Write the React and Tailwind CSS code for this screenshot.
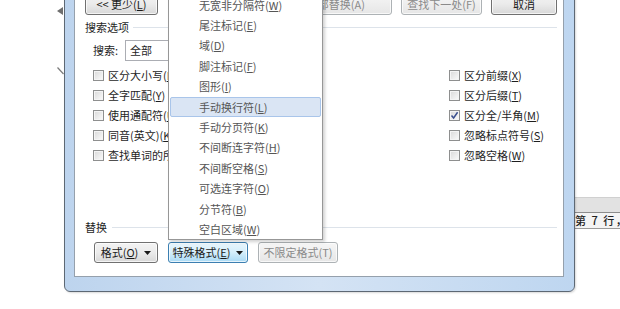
import React from 'react'

const FONT = "font-['Noto_Sans_CJK_SC','Microsoft_YaHei',sans-serif]"

function K({ children }) {
  return <span className="underline underline-offset-[1px]">{children}</span>
}

function Arrow() {
  return (
    <svg width="7" height="4" viewBox="0 0 7 4" className="ml-[6px] shrink-0">
      <path d="M0 0 H7 L3.5 4 Z" fill="#1a1a1a" />
    </svg>
  )
}

function Btn({ children, variant = 'normal', className = '' }) {
  const styles = {
    normal: 'border-[#707070] bg-linear-to-b from-[#f3f3f3] via-[#ebebeb] to-[#d8d8d8] text-[#1a1a1a]',
    hot: 'border-[#3c7fb1] bg-linear-to-b from-[#e8f5fc] via-[#d4eefb] to-[#a9daf5] text-[#1a1a1a]',
    disabled: 'border-[#adb2b5] bg-linear-to-b from-[#f6f6f6] to-[#e6e6e6] text-[#8a8a8a]',
  }
  return (
    <div
      className={`flex items-center whitespace-nowrap rounded-[3px] border shadow-[inset_0_0_0_1px_rgba(255,255,255,0.7)] text-[11px] leading-none ${styles[variant]} ${className}`}
    >
      {children}
    </div>
  )
}

function Check({ checked, children }) {
  return (
    <div className="flex items-center h-[20px]">
      <span className="w-[11px] h-[11px] border border-[#8e8f8f] bg-linear-to-br from-[#d9d9d9] to-[#fbfbfb] shadow-[inset_0_0_0_1px_#f4f4f4] flex items-center justify-center shrink-0">
        {checked && (
          <svg width="9" height="9" viewBox="0 0 9 9">
            <path d="M1.5 4.5 L3.6 7 L7.6 1.2" fill="none" stroke="#3a4f8e" strokeWidth="1.5" />
          </svg>
        )}
      </span>
      <span className="ml-[4px] text-[11px] leading-none text-[#1e1e1e] whitespace-nowrap">{children}</span>
    </div>
  )
}

const menuItems = [
  ['无宽非分隔符', 'W'],
  ['尾注标记', 'E'],
  ['域', 'D'],
  ['脚注标记', 'F'],
  ['图形', 'I'],
  ['手动换行符', 'L'],
  ['手动分页符', 'K'],
  ['不间断连字符', 'H'],
  ['不间断空格', 'S'],
  ['可选连字符', 'O'],
  ['分节符', 'B'],
  ['空白区域', 'W'],
]

export default function App() {
  return (
    <div className={`relative w-[620px] h-[309px] overflow-hidden bg-white ${FONT}`}>
      {/* bits of the document behind the dialog */}
      <svg className="absolute left-[56px] top-[7px]" width="8" height="8" viewBox="0 0 8 8">
        <path d="M7 0 V8 L1 4 Z" fill="#6e6e6e" />
      </svg>
      <svg className="absolute left-[57px] top-[67px]" width="7" height="8" viewBox="0 0 7 8">
        <path d="M0.5 0.5 L6.5 7" stroke="#7a7a7a" strokeWidth="1.2" />
      </svg>

      {/* status bar to the right */}
      <div className="absolute left-[575px] top-[197px] w-[45px] flex flex-col">
        <div className="h-[15px] bg-[#e2e2e2] border-t border-[#d0d0d0]" />
        <div className="h-[17px] bg-[#f4f4f4] border-t border-[#8c8c8c] border-b border-b-[#9a9a9a] flex items-center">
          <span className="text-[11px] leading-none font-medium text-[#222] whitespace-nowrap tracking-[1.5px]">第 7 行，第</span>
        </div>
      </div>

      {/* dialog window */}
      <div className="absolute left-[64px] top-[-40px] w-[511px] h-[332px] border border-[#5d6874] rounded-b-[6px] bg-linear-to-r from-[#bdd4ee] via-[#d4e3f4] to-[#bed6f0] pl-[9px] pr-[10px] pb-[14px] shadow-[1px_1px_2px_rgba(0,0,0,0.15)]">
        <div className="h-full border border-[#95a0ac] bg-white flex flex-col">
          {/* top buttons */}
          <div className="flex items-start mt-[31px]">
            <Btn className="ml-[10px] w-[73px] h-[22px] justify-center">&lt;&lt; 更少(<K>L</K>)</Btn>
            <div className="flex-1" />
            <div className="flex gap-[9px] mr-[6px]">
              <Btn variant="disabled" className="w-[81px] h-[22px] justify-center">替换(<K>R</K>)</Btn>
              <Btn variant="disabled" className="w-[81px] h-[22px] justify-end pr-[26px]">全部替换(A)</Btn>
              <Btn variant="disabled" className="w-[81px] h-[22px] justify-center">查找下一处(F)</Btn>
              <Btn className="w-[66px] h-[22px] justify-center">取消</Btn>
            </div>
          </div>

          {/* search options header */}
          <div className="flex items-center h-[14px] mt-[5px]">
            <span className="ml-[10px] text-[11px] leading-none text-[#1e1e1e]">搜索选项</span>
            <div className="flex-1 h-px bg-[#dde3ea] ml-[4px] mr-[6px]" />
          </div>

          {/* search combo */}
          <div className="flex items-center h-[21px] mt-[6px]">
            <span className="ml-[18px] text-[11px] leading-none text-[#1e1e1e]">搜索:</span>
            <div className="ml-[7px] w-[180px] h-[21px] border border-[#abadb3] flex items-center pl-[4px]">
              <span className="text-[11px] leading-none text-[#1e1e1e]">全部</span>
            </div>
          </div>

          {/* options */}
          <div className="flex mt-[4px] ml-[18px]">
            <div className="w-[356px] flex flex-col">
              <Check>区分大小写(<K>H</K>)</Check>
              <Check>全字匹配(<K>Y</K>)</Check>
              <Check>使用通配符(<K>U</K>)</Check>
              <Check>同音(英文)(<K>K</K>)</Check>
              <Check>查找单词的所有形式(英文)(<K>W</K>)</Check>
            </div>
            <div className="flex flex-col">
              <Check>区分前缀(<K>X</K>)</Check>
              <Check>区分后缀(<K>T</K>)</Check>
              <Check checked>区分全/半角(<K>M</K>)</Check>
              <Check>忽略标点符号(<K>S</K>)</Check>
              <Check>忽略空格(<K>W</K>)</Check>
            </div>
          </div>

          {/* replace header */}
          <div className="flex items-center h-[14px] mt-[55px]">
            <span className="ml-[10px] text-[11px] leading-none text-[#1e1e1e]">替换</span>
            <div className="flex-1 h-px bg-[#dde3ea] ml-[5px] mr-[6px]" />
          </div>

          {/* replace buttons */}
          <div className="flex gap-[10px] ml-[19px] mt-[8px]">
            <Btn className="w-[64px] h-[21px] justify-center">格式(<K>O</K>)<Arrow /></Btn>
            <Btn variant="hot" className="w-[80px] h-[21px] justify-center">特殊格式(<K>E</K>)<Arrow /></Btn>
            <Btn variant="disabled" className="w-[80px] h-[21px] justify-center">不限定格式(T)</Btn>
          </div>
        </div>
      </div>

      {/* special format dropdown menu */}
      <div className="absolute left-[168px] top-[-8px] w-[155px] h-[248px] border border-[#979797] bg-white shadow-[2px_2px_3px_rgba(0,0,0,0.18)] pt-[2px] px-[1px]">
        {menuItems.map(([label, key], i) => (
          <div
            key={i}
            className={`h-[20.4px] flex items-center pl-[28px] rounded-[2px] border ${
              i === 5 ? 'bg-[#dae5f4] border-[#a9c5ea]' : 'border-transparent'
            }`}
          >
            <span className="text-[11px] leading-none text-[#555] whitespace-nowrap">
              {label}(<K>{key}</K>)
            </span>
          </div>
        ))}
      </div>
    </div>
  )
}
